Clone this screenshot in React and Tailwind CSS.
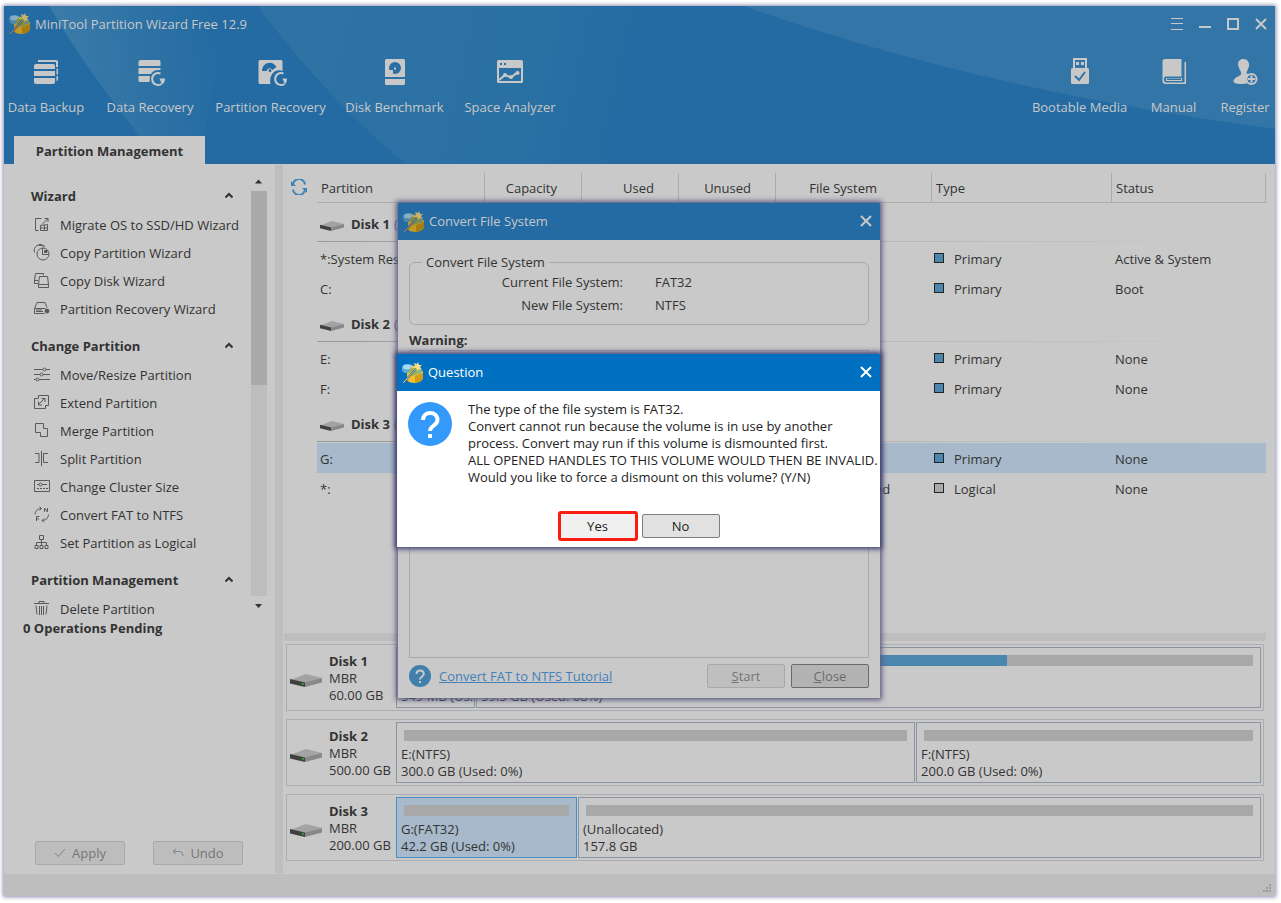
import React from 'react';

const sidebarGroups = [
  {
    title: 'Wizard',
    items: [
      { label: 'Migrate OS to SSD/HD Wizard', icon: 'migrate' },
      { label: 'Copy Partition Wizard', icon: 'copyPartition' },
      { label: 'Copy Disk Wizard', icon: 'copyDisk' },
      { label: 'Partition Recovery Wizard', icon: 'recovery' },
    ],
  },
  {
    title: 'Change Partition',
    items: [
      { label: 'Move/Resize Partition', icon: 'resize' },
      { label: 'Extend Partition', icon: 'extend' },
      { label: 'Merge Partition', icon: 'merge' },
      { label: 'Split Partition', icon: 'split' },
      { label: 'Change Cluster Size', icon: 'cluster' },
      { label: 'Convert FAT to NTFS', icon: 'convert' },
      { label: 'Set Partition as Logical', icon: 'logical' },
    ],
  },
  {
    title: 'Partition Management',
    items: [{ label: 'Delete Partition', icon: 'trash' }],
  },
];

const partitionTable = [
  {
    disk: 'Disk 1',
    rows: [
      { name: '*:System Rese', type: 'Primary', status: 'Active & System' },
      { name: 'C:', type: 'Primary', status: 'Boot' },
    ],
  },
  {
    disk: 'Disk 2',
    rows: [
      { name: 'E:', type: 'Primary', status: 'None' },
      { name: 'F:', type: 'Primary', status: 'None' },
    ],
  },
  {
    disk: 'Disk 3',
    rows: [
      { name: 'G:', type: 'Primary', status: 'None', selected: true },
      { name: '*:', fs: 'Unallocated', type: 'Logical', status: 'None' },
    ],
  },
];

const diskMap = [
  {
    name: 'Disk 1',
    size: '60.00 GB',
    parts: [
      { label: '', detail: '549 MB (Us.', used: 6, width: 'w-[79px] shrink-0' },
      { label: '', detail: '59.5 GB (Used: 68%)', used: 68, width: 'flex-1' },
    ],
  },
  {
    name: 'Disk 2',
    size: '500.00 GB',
    parts: [
      { label: 'E:(NTFS)', detail: '300.0 GB (Used: 0%)', used: 0, width: 'flex-[76_76_0%]' },
      { label: 'F:(NTFS)', detail: '200.0 GB (Used: 0%)', used: 0, width: 'flex-[50_50_0%]' },
    ],
  },
  {
    name: 'Disk 3',
    size: '200.00 GB',
    parts: [
      { label: 'G:(FAT32)', detail: '42.2 GB (Used: 0%)', used: 0, width: 'w-[181px] shrink-0', selected: true },
      { label: '(Unallocated)', detail: '157.8 GB', used: 0, width: 'flex-1' },
    ],
  },
];

function SidebarIcon({ name }) {
  const shapes = {
    migrate: (
      <>
        <path d="M8.5 2.5h-6v12h3" />
        <path d="M9 8.500l6-6M11.500 2.500h3.500v3.500" />
        <path d="M7.500 9.500l7-1v6h-7zM11.500 9v5.500M7.500 12h7" />
      </>
    ),
    copyPartition: (
      <>
        <circle cx="10" cy="10" r="6" />
        <path d="M9.5 4v6.500h6" />
        <path d="M11.5 6.500h2.500v2h-2.500z" fill="#555" />
        <path d="M1.5 8.500a6 6 0 0 1 9-7M6 1.500h5v2" />
      </>
    ),
    copyDisk: (
      <>
        <path d="M5 11.5H1.500V9l1-7.500h8v2" />
        <path d="M1.5 8.500H5" />
        <path d="M6.5 4.500h8l1 8v3H5.500v-3zM5.500 12.500h10" />
      </>
    ),
    recovery: (
      <>
        <path d="M1.5 8.500L4 2.500h8l2 5M1.500 8.500h11M1.500 8.500v5h10" />
        <path d="M3 11.5h7M3 10h6" />
        <circle cx="14" cy="11" r="2" fill="#555" />
      </>
    ),
    resize: (
      <>
        <path d="M1 3.5h9M13 3.500h4M1 8.500h6M10 8.500h7M1 13.500h2M6 13.500h11" />
        <circle cx="11.5" cy="3.5" r="1.500" />
        <circle cx="8.5" cy="8.5" r="1.500" />
        <circle cx="4.5" cy="13.5" r="1.500" />
      </>
    ),
    extend: (
      <>
        <path d="M5.5 4V1.500h10v10H13" />
        <path d="M5.5 4.500h-4v10h11V11" />
        <path d="M5 11l7-7M8.500 4.500h3.500V8M5.500 7.500v3.500H9" />
      </>
    ),
    merge: <path d="M2.5 1.500h8v5h4v8h-7v-4h-5z" />,
    split: <path d="M8.5 1v15M2 3.500h4v9H2M15 3.500h-4.500v9H15" />,
    cluster: (
      <>
        <path d="M1.5 2.500h15v11h-15zM4 6.500h2M9 6.500h5" />
        <circle cx="7.5" cy="6.5" r="1.500" />
        <path d="M4 10.500h11" strokeDasharray="2 1" />
      </>
    ),
    convert: (
      <>
        <path d="M2 8.500a6 6 0 0 1 6-6M6.500.5l2 2-2 2M15.500 8.500a6 6 0 0 1-6 6M11 12.500l-2 2 2 2" />
        <path d="M11.5 6V2l3 4V2M3.500 15v-4.500h3M3.500 13H6" />
      </>
    ),
    logical: (
      <>
        <path d="M6.500 1.500h4v4h-4zM8.500 5.500v6M3.500 11.500v-3h10v3" />
        <path d="M2 11.500h3v3H2zM7 11.500h3v3H7zM12 11.500h3v3h-3z" />
      </>
    ),
    trash: (
      <>
        <path d="M1 3.500h15M6 3V1.500h5V3" />
        <path d="M3 5.500l1 9M14 5.500l-1 9M6.500 6v9M8.500 6v9M10.500 6v9" />
      </>
    ),
  };
  return (
    <svg className="h-[18px] w-[18px] shrink-0" viewBox="0 0 18 18" fill="none" stroke="#5a5a5a">
      {shapes[name]}
    </svg>
  );
}

function AppLogo({ dim }) {
  return (
    <svg className={dim ? 'h-[22px] w-[22px] brightness-80' : 'h-[22px] w-[22px]'} viewBox="0 0 22 22">
      <path d="M0 6q0-4 5-4t6 2v7H3q-3-1-3-3z" fill="#5da9d6" />
      <ellipse cx="5.5" cy="5" rx="4.500" ry="2.500" fill="#a5dbf5" />
      <path d="M5 11l8-3 8 1v7q-1 4-8 5-7 0-8-3z" fill="#f0c02a" />
      <path d="M13 14l8-3v5q-1 4-8 5z" fill="#d39c18" />
      <path d="M7 8q2-4 6-4 6 0 7 6l-6 3-5 1z" fill="#9cb456" />
      <path d="M16 0l1 3h3l-2 2 2 3-3-1-2 2-1-3-3 0 2-2-1-3 3 1z" fill="#f7e08a" />
      <circle cx="11" cy="5" r="1.500" fill="#f3cf51" />
      <circle cx="18" cy="10" r="1.500" fill="#6fb6c9" />
      <path d="M1 21L14 7" stroke="#596774" strokeWidth="2" />
      <path d="M1 21L14 7" stroke="#d2dade" strokeWidth=".8" />
    </svg>
  );
}

function DriveIcon({ className, lamp }) {
  return (
    <svg className={className} viewBox="0 0 32 13" preserveAspectRatio="none">
      <path d="M0 6L16 0l16 4-17 5z" fill="#a3a3a3" />
      <path d="M0 5l15 3.500V13L0 9.500z" fill="#404040" />
      <path d="M15 8.500L32 4v4.500L15 13z" fill="#888" />
      {lamp && <path d="M12 9h1.500v2H12z" fill="#3fae3f" />}
    </svg>
  );
}

function CloseIcon() {
  return (
    <svg className="h-3 w-3" viewBox="0 0 12 12" fill="none" stroke="currentColor" strokeWidth="2">
      <path d="M1 1l10 10M11 1L1 11" />
    </svg>
  );
}

function QuestionIcon({ className, color, mark }) {
  return (
    <svg className={className} viewBox="0 0 44 44" fill="none">
      <circle cx="22" cy="22" r="22" fill={color} />
      <path d="M15 18c0-9.500 14.500-9.500 14.500 0 0 5.500-7.500 5.500-7.500 11" stroke={mark} strokeWidth="4" />
      <path d="M20 32h4v4h-4z" fill={mark} />
    </svg>
  );
}

function ToolButton({ label, width, children }) {
  return (
    <button type="button" className={`flex shrink-0 flex-col items-center whitespace-nowrap ${width}`}>
      <svg className="h-8 w-8" viewBox="0 0 32 32" fill="#c8c8c8">
        {children}
      </svg>
      <span className="mt-[11px] leading-[17px]">{label}</span>
    </button>
  );
}

function Header() {
  return (
    <header className="relative flex h-[158px] flex-col bg-[#236ba2] text-[#c8c8c8]">
      <svg className="absolute inset-0 h-full w-full" viewBox="0 0 1271 158" preserveAspectRatio="none">
        <defs>
          <linearGradient id="ray1" gradientUnits="userSpaceOnUse" x1="60" y1="30" x2="215" y2="10">
            <stop offset="0" stopColor="#397aa8" />
            <stop offset="1" stopColor="#236ba2" />
          </linearGradient>
          <linearGradient id="ray2" gradientUnits="userSpaceOnUse" x1="300" y1="60" x2="620" y2="130">
            <stop offset="0" stopColor="#2f73a5" />
            <stop offset=".7" stopColor="#2970a3" />
            <stop offset="1" stopColor="#236ba2" />
          </linearGradient>
        </defs>
        <path d="M45 0Q80 60 136 130H200L225 0z" fill="url(#ray1)" />
        <path d="M254 0Q320 90 402 158H600L670 0z" fill="url(#ray2)" />
        <path d="M739 0Q980 85 1271 123V0z" fill="#3375a6" />
      </svg>

      <div className="relative flex h-9 items-center pl-[5px] pr-2">
        <AppLogo dim />
        <h1 className="ml-1 flex-1 pt-0.5">MiniTool Partition Wizard Free 12.9</h1>
        <div className="flex items-center gap-4">
          <button type="button" aria-label="Menu">
            <svg className="h-3 w-3" viewBox="0 0 12 12" stroke="currentColor">
              <path d="M0 .5h12M0 5.500h12M0 11.500h12" />
            </svg>
          </button>
          <button type="button" aria-label="Minimize">
            <svg className="h-3 w-3" viewBox="0 0 12 12" stroke="currentColor" strokeWidth="2">
              <path d="M0 9h12" />
            </svg>
          </button>
          <button type="button" aria-label="Maximize">
            <svg className="h-3 w-3" viewBox="0 0 12 12" fill="none" stroke="currentColor" strokeWidth="2">
              <path d="M1 1h10v10H1z" />
            </svg>
          </button>
          <button type="button" aria-label="Close window">
            <CloseIcon />
          </button>
        </div>
      </div>

      <nav className="relative mt-3.5 flex justify-between pl-1.5 pr-1.5">
        <div className="flex gap-[26px]">
          <ToolButton label="Data Backup" width="w-[72px]">
            <path d="M8 4h18a2 2 0 0 1 2 2v5h-2V6H8zM26.500 12.500H28v6h-1.500zM26.500 20H28v4a2 2 0 0 1-1.500 1z" />
            <path d="M6 8h17a2 2 0 0 1 2 2v3H4v-3a2 2 0 0 1 2-2zM4 15h21v5H4zM4 22h21v4a2 2 0 0 1-2 2H6a2 2 0 0 1-2-2z" />
          </ToolButton>
          <ToolButton label="Data Recovery" width="w-[84px]">
            <path d="M6 4h19a1.500 1.500 0 0 1 1.500 1.500V10h-22V5.500zM4.500 12h22v2c-5-.5-8 1-9.500 4H4.500zM4.500 20h11.500l-.5 6H6a1.500 1.500 0 0 1-1.500-1.500z" />
            <path d="M26.500 17.500a6 6 0 1 0 1 10.500" fill="none" stroke="#c8c8c8" strokeWidth="2" />
            <path d="M25.500 22.500h5.500c0 3-1 5-3 6z" />
          </ToolButton>
          <ToolButton label="Partition Recovery" width="w-[105px]">
            <path
              fillRule="evenodd"
              d="M5 4h21a1.500 1.500 0 0 1 1.500 1.500V15c-7-3-14 4-12 13H5a1.500 1.500 0 0 1-1.500-1.500v-21A1.500 1.500 0 0 1 5 4zM7 15h4.500c1-3 4-4 6-1l4-3C17 3 7 7 7 15zm6.500-.5a1.500 1.500 0 1 0 3 0 1.500 1.500 0 0 0-3 0z"
            />
            <path d="M28.500 17.500a6 6 0 1 0 1 10.500" fill="none" stroke="#c8c8c8" strokeWidth="2" />
            <path d="M27.500 22.500H32c0 3-1 5-2 6z" />
          </ToolButton>
          <ToolButton label="Disk Benchmark" width="w-[91px]">
            <path d="M7.500 3h17A1.500 1.500 0 0 1 26 4.500V21H6V4.500A1.500 1.500 0 0 1 7.500 3z" />
            <path d="M6 23h20v4.500a1.500 1.500 0 0 1-1.500 1.500h-17A1.500 1.500 0 0 1 6 27.500z" />
            <circle cx="16" cy="12" r="6" fill="#2a70a4" />
            <path d="M9 14h5v5H9zM15 11.500h2v2h-2z" />
          </ToolButton>
          <ToolButton label="Space Analyzer" width="w-[88px]">
            <path
              fillRule="evenodd"
              d="M4.500 4h23A1.500 1.500 0 0 1 29 5.500v20a1.500 1.500 0 0 1-1.500 1.500h-23A1.500 1.500 0 0 1 3 25.500v-20A1.500 1.500 0 0 1 4.500 4zM5 12v13h22V12zm1-5v2h2V7zm4 0v2h2V7z"
            />
            <path d="M5 24l6-5 6 2.500 6-5" fill="none" stroke="#c8c8c8" strokeWidth="2" />
            <circle cx="11" cy="19" r="2" />
            <circle cx="17" cy="21" r="2" />
            <circle cx="23.5" cy="17" r="2" />
          </ToolButton>
        </div>
        <div className="flex gap-[26px]">
          <ToolButton label="Bootable Media" width="w-[93px]">
            <path
              fillRule="evenodd"
              d="M9 2h14v10h-2V4H11v8H9zM12 6h3v3h-3zM17 6h3v3h-3zM8.500 12h15a1.500 1.500 0 0 1 1.500 1.500v13a1.500 1.500 0 0 1-1.500 1.500h-15A1.500 1.500 0 0 1 7 26.500v-13A1.500 1.500 0 0 1 8.500 12z"
            />
            <path d="M11 20l4 4 6-8" fill="none" stroke="#2f73a5" strokeWidth="2" />
          </ToolButton>
          <ToolButton label="Manual" width="w-[43px]">
            <path
              fillRule="evenodd"
              d="M7 3h15.500a1 1 0 0 1 1 1v16.500H8c-1.500 0-2 1-2 2.500s.5 3.500 2 3.500h18.500V6h1.500v22H7.500C5.500 28 4.500 27 4.500 25V5.500C4.500 4 5.500 3 7 3z"
            />
            <path d="M8 22h16v3H8z" />
            <path d="M9 22.500h14V24H9z" fill="#2f73a5" />
          </ToolButton>
          <ToolButton label="Register" width="w-[48px]">
            <path d="M14.500 3c4 0 6 3 5.500 7-.5 3-2.500 5-2.500 7.500l3 .5c-3 2-4 6-2 9.500-4 .8-11 .8-13.500-1-1.500-2 1-5 5-6.500 2.500-1 2.500-2.500 1.500-5C10 12 9 10.500 9 8c0-3 2.500-5 5.500-5z" />
            <circle cx="22.5" cy="23" r="5" fill="none" stroke="#c8c8c8" strokeWidth="2" />
            <path d="M21.500 19.500h2V22H26v2h-2.500v2.500h-2V24H19v-2h2.500z" />
          </ToolButton>
        </div>
      </nav>

      <div className="relative mt-auto flex pl-2.5">
        <button type="button" className="h-7 w-[191px] bg-[#c9c9c9] pt-1 font-bold text-[#333]">
          Partition Management
        </button>
      </div>
    </header>
  );
}

function Sidebar() {
  return (
    <aside className="flex w-[271px] shrink-0 flex-col">
      <div className="flex h-[454px] pt-[9px]">
        <div className="flex-1 overflow-hidden">
          {sidebarGroups.map((group) => (
            <section key={group.title} className="pt-2">
              <button
                type="button"
                className="flex h-[30px] w-full items-center justify-between pl-[27px] pr-[18px] font-bold"
              >
                <span className="pt-0.5">{group.title}</span>
                <svg className="h-2 w-2" viewBox="0 0 8 8" fill="none" stroke="#333" strokeWidth="2">
                  <path d="M.5 5.500L4 2l3.500 3.500" />
                </svg>
              </button>
              {group.items.map((item) => (
                <button
                  key={item.label}
                  type="button"
                  className="flex h-7 w-full items-center gap-[9px] whitespace-nowrap pl-[29px]"
                >
                  <SidebarIcon name={item.icon} />
                  <span className="pt-0.5">{item.label}</span>
                </button>
              ))}
            </section>
          ))}
        </div>
        <div className="mr-2 flex w-4 flex-col items-center">
          <svg className="my-[5px] h-2 w-2" viewBox="0 0 8 8" fill="#333">
            <path d="M3.500 1.500L7 5.500H0z" />
          </svg>
          <div className="h-[405px] w-full bg-[#bdbdbd]">
            <div className="h-[194px] bg-[#a9a9a9]" />
          </div>
          <svg className="mt-1.5 h-2 w-2" viewBox="0 0 8 8" fill="#333">
            <path d="M3.500 6L0 2h7z" />
          </svg>
        </div>
      </div>
      <p className="h-5 pl-[19px] font-bold leading-5">0 Operations Pending</p>
      <div className="mt-auto flex gap-7 pb-[9px] pl-[31px] text-[#757575]">
        <button
          type="button"
          className="flex h-6 w-[90px] items-center justify-center gap-1.5 rounded-xs border border-[#a9a9a9] bg-[#bdbdbd]"
        >
          <svg className="h-3 w-3" viewBox="0 0 12 12" fill="none" stroke="#858585">
            <path d="M1 6l3.500 3.500L11 2" />
          </svg>
          <span className="pt-0.5">Apply</span>
        </button>
        <button
          type="button"
          className="flex h-6 w-[90px] items-center justify-center gap-1.5 rounded-xs border border-[#a9a9a9] bg-[#bdbdbd]"
        >
          <svg className="h-3 w-3" viewBox="0 0 12 12" fill="none" stroke="#858585">
            <path d="M4 2L1 4.500 4 7M1 4.500h7Q11 5 11 9" />
          </svg>
          <span className="pt-0.5">Undo</span>
        </button>
      </div>
    </aside>
  );
}

function PartitionList() {
  return (
    <div className="flex flex-1 pr-[9px] pt-[9px]">
      <div className="w-[34px] shrink-0 pl-2 pt-1.5">
        <button type="button" aria-label="Refresh" className="block">
          <svg className="h-4 w-4" viewBox="0 0 16 16" fill="none" stroke="#3f84b5" strokeWidth="2">
            <path d="M2 6.500A6 6 0 0 1 14 5.500M14 9.500A6 6 0 0 1 2 10.500" />
            <path d="M0 2v5h5zM16 14V9h-5z" fill="#3f84b5" stroke="none" />
          </svg>
        </button>
      </div>
      <table className="w-full table-fixed border-separate border-spacing-0 self-start whitespace-nowrap">
        <colgroup>
          <col className="w-[168px]" />
          <col className="w-[97px]" />
          <col className="w-[97px]" />
          <col className="w-[97px]" />
          <col className="w-[156px]" />
          <col className="w-[180px]" />
          <col />
        </colgroup>
        <thead>
          <tr className="h-[30px] text-left [&>th]:border-b [&>th]:border-r [&>th]:border-[#ababab] [&>th]:pt-0.5 [&>th]:font-normal">
            <th className="pl-1">Partition</th>
            <th className="pr-6 text-right">Capacity</th>
            <th className="pr-6 text-right">Used</th>
            <th className="pr-6 text-right">Unused</th>
            <th className="pr-[54px] text-right">File System</th>
            <th className="pl-1">Type</th>
            <th className="pl-1">Status</th>
          </tr>
        </thead>
        {partitionTable.map((group) => (
          <tbody key={group.disk}>
            <tr className="h-10">
              <td colSpan={7}>
                <div className="flex h-[38px] items-center pl-[3px] pt-1.5">
                  <DriveIcon className="mr-[7px] mt-0.5 h-2.5 w-6" />
                  <b>{group.disk}</b>
                  <span className="ml-1 text-[#70518a]">(</span>
                </div>
                <div className="mb-px h-px bg-linear-to-r from-[#9a9a9a] to-transparent to-96%" />
              </td>
            </tr>
            {group.rows.map((row) => (
              <tr
                key={row.name}
                className={row.selected ? 'h-[30px] bg-[#a7b9ca] [&>td]:pt-1' : 'h-[30px] [&>td]:pt-1'}
              >
                <td className="pl-[3px]">{row.name}</td>
                <td />
                <td />
                <td />
                <td className="text-center">{row.fs}</td>
                <td className="pl-0.5">
                  <span
                    className={
                      row.type === 'Primary'
                        ? 'mb-px mr-2.5 inline-block h-2.5 w-2.5 border border-[#222] bg-[#4a86ae]'
                        : 'mb-px mr-2.5 inline-block h-2.5 w-2.5 border border-[#222] bg-[#a9a9a9]'
                    }
                  />
                  {row.type}
                </td>
                <td className="pl-[3px]">{row.status}</td>
              </tr>
            ))}
          </tbody>
        ))}
      </table>
    </div>
  );
}

function DiskMap() {
  return (
    <div className="flex flex-col gap-2 pb-[13px] pl-[3px] pr-[11px] pt-[3px]">
      {diskMap.map((disk) => (
        <div key={disk.name} className="flex h-[67px] border border-[#adadb2] p-0.5">
          <div className="flex w-[107px] shrink-0 items-center pl-px pt-0.5">
            <DriveIcon className="mr-[7px] mt-1 h-[13px] w-8" lamp />
            <div className="whitespace-nowrap leading-[17px]">
              <b className="block">{disk.name}</b>
              <div>MBR</div>
              <div>{disk.size}</div>
            </div>
          </div>
          <div className="flex min-w-0 flex-1 gap-px">
            {disk.parts.map((part) => (
              <div
                key={part.detail}
                className={`min-w-0 whitespace-nowrap border px-1 pt-[7px] leading-[17px] ${part.width} ${
                  part.selected ? 'border-[#4a90c4] bg-[#a7b9ca]' : 'border-[#8a94a2]'
                }`}
              >
                <div className="mx-[3px] mb-[5px] h-[11px] bg-[#a8a8a8]">
                  <div className="h-full bg-[#4a86ae]" style={{ width: `${part.used}%` }} />
                </div>
                <div className="h-[17px]">{part.label}</div>
                <div>{part.detail}</div>
              </div>
            ))}
          </div>
        </div>
      ))}
    </div>
  );
}

function QuestionDialog() {
  return (
    <div
      role="dialog"
      aria-label="Question"
      className="absolute -left-px right-0 top-[151px] bg-white text-[#222] shadow-[0_0_5px_2px_#3c3c6e]"
    >
      <div className="flex h-[37px] items-center bg-[#0070c1] pl-[5px] pr-2 text-white">
        <AppLogo />
        <h2 className="ml-1 flex-1">Question</h2>
        <button type="button" aria-label="Close question" className="pb-0.5">
          <CloseIcon />
        </button>
      </div>
      <div className="flex pl-[11px] pt-[11px]">
        <QuestionIcon className="h-11 w-11 shrink-0" color="#3399fa" mark="#fff" />
        <div className="-mt-px ml-4 whitespace-nowrap leading-[17px]">
          <p>The type of the file system is FAT32.</p>
          <p>
            Convert cannot run because the volume is in use by another
            <br />
            process. Convert may run if this volume is dismounted first.
          </p>
          <p>ALL OPENED HANDLES TO THIS VOLUME WOULD THEN BE INVALID.</p>
          <p>Would you like to force a dismount on this volume? (Y/N)</p>
        </div>
      </div>
      <div className="flex items-center justify-center gap-1 pb-1.5 pt-[25px]">
        <button type="button" className="h-[30px] w-20 rounded-[3px] border-3 border-[#fb1d10] bg-[#f0f0f0] pt-0.5">
          Yes
        </button>
        <button type="button" className="h-6 w-[78px] rounded-xs border border-[#7d7d7d] bg-[#e1e1e1] pt-0.5">
          No
        </button>
      </div>
    </div>
  );
}

function ConvertDialog() {
  return (
    <div
      role="dialog"
      aria-label="Convert File System"
      className="relative h-[495px] w-[482px] bg-[#c9c9c9] shadow-[0_0_5px_2px_#5a5a80]"
    >
      <div className="flex h-[37px] items-center bg-[#236ba2] pl-[5px] pr-2 text-[#c8c8c8]">
        <AppLogo dim />
        <h2 className="ml-1 flex-1">Convert File System</h2>
        <button type="button" aria-label="Close dialog" className="pb-0.5">
          <CloseIcon />
        </button>
      </div>
      <div className="flex h-[458px] flex-col px-[11px] pt-3.5">
        <fieldset className="h-[71px] rounded-md border border-[#a9a9a9] px-3">
          <legend className="px-1 leading-[17px]">Convert File System</legend>
          <dl className="grid grid-cols-[201px_1fr] gap-x-8 leading-[23px]">
            <dt className="text-right">Current File System:</dt>
            <dd>FAT32</dd>
            <dt className="text-right">New File System:</dt>
            <dd>NTFS</dd>
          </dl>
        </fieldset>
        <p className="mt-[7px] font-bold leading-[17px]">Warning:</p>
        <div className="mt-px flex-1 border border-[#a9a9a9]" />
        <div className="flex h-10 items-center pb-1">
          <QuestionIcon className="h-[22px] w-[22px]" color="#417fac" mark="#c9c9c9" />
          <div className="ml-2 flex-1 pt-0.5">
            <a href="#tutorial" className="text-[#4480b8] underline">
              Convert FAT to NTFS Tutorial
            </a>
          </div>
          <button
            type="button"
            className="mr-1.5 h-6 w-[78px] rounded-xs border border-[#a9a9a9] bg-[#bfbfbf] pt-0.5 text-[#757575]"
          >
            <u>S</u>tart
          </button>
          <button
            type="button"
            className="h-6 w-[78px] rounded-xs border border-[#6b6b6b] bg-[#b3b3b3] pt-0.5 text-[#6b6b6b]"
          >
            <u>C</u>lose
          </button>
        </div>
      </div>
      <QuestionDialog />
    </div>
  );
}

export default function App() {
  return (
    <div className="flex min-h-screen flex-col bg-white pb-[7px] pl-1 pr-1.5 pt-1.5 font-['Open_Sans','Noto_Sans',sans-serif] text-[13px] text-[#333]">
      <div className="relative flex flex-1 flex-col bg-[#c9c9c9] shadow-[0_0_4px_1px_#8a8ab0]">
        <Header />
        <main className="flex flex-1">
          <Sidebar />
          <div className="my-px w-2 shrink-0 bg-[#bebebe]" />
          <div className="flex min-w-0 flex-1 flex-col">
            <PartitionList />
            <div className="ml-px mr-[9px] h-2 bg-[#bebebe]" />
            <DiskMap />
          </div>
        </main>
        <footer className="flex h-[22px] items-end justify-end bg-[#bebebe] p-[3px]">
          <svg className="h-2.5 w-2.5" viewBox="0 0 10 10" fill="#9a9a9a">
            <path d="M7 1h2v2H7zM4 4h2v2H4zM7 4h2v2H7zM1 7h2v2H1zM4 7h2v2H4zM7 7h2v2H7z" />
          </svg>
        </footer>
        <div className="absolute left-0 right-px top-[197px] flex justify-center">
          <ConvertDialog />
        </div>
      </div>
    </div>
  );
}
